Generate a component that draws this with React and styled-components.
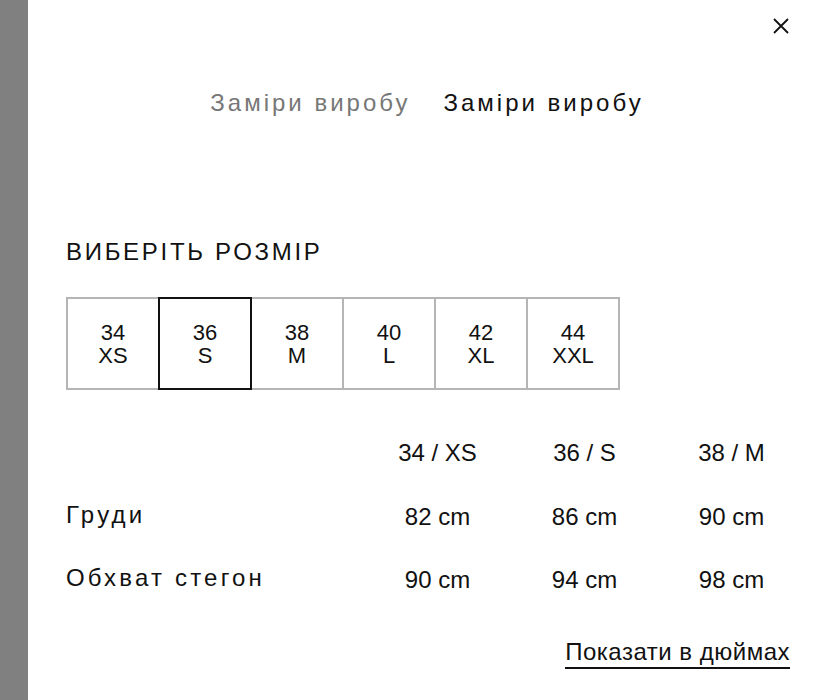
import styled, { createGlobalStyle } from "styled-components"

const GlobalStyle = createGlobalStyle`
  html, body {
    margin: 0;
    padding: 0;
    background: #808080;
  }
  body {
    font-family: "Liberation Sans", Arial, sans-serif;
    color: #111;
  }
`;

const sizes = [
  { num: "34", label: "XS" },
  { num: "36", label: "S" },
  { num: "38", label: "M" },
  { num: "40", label: "L" },
  { num: "42", label: "XL" },
  { num: "44", label: "XXL" },
];

const rows = [
  { name: "Груди", values: ["82 cm", "86 cm", "90 cm"] },
  { name: "Обхват стегон", values: ["90 cm", "94 cm", "98 cm"] },
];

const App = () => {
  return (
    <>
      <GlobalStyle />
      <Page>
        <Panel>
          <CloseRow>
            <CloseButton aria-label="close">
              <svg width="16" height="16" viewBox="0 0 16 16">
                <path d="M1 1L15 15M15 1L1 15" stroke="#111" strokeWidth="1.8" />
              </svg>
            </CloseButton>
          </CloseRow>

          <Tabs>
            <Tab>Заміри виробу</Tab>
            <Tab $active>Заміри виробу</Tab>
          </Tabs>

          <Title>ВИБЕРІТЬ РОЗМІР</Title>

          <SizeGrid>
            {sizes.map((s) => (
              <SizeBox key={s.num} $selected={s.num === "36"}>
                <SizeLine>{s.num}</SizeLine>
                <SizeLine>{s.label}</SizeLine>
              </SizeBox>
            ))}
          </SizeGrid>

          <Table>
            <Row>
              <Label />
              <Cell>34 / XS</Cell>
              <Cell>36 / S</Cell>
              <Cell>38 / M</Cell>
            </Row>
            {rows.map((r) => (
              <Row key={r.name}>
                <Label>{r.name}</Label>
                {r.values.map((v, i) => (
                  <Cell key={i}>{v}</Cell>
                ))}
              </Row>
            ))}
          </Table>

          <Footer>
            <InchLink href="#">Показати в дюймах</InchLink>
          </Footer>
        </Panel>
      </Page>
    </>
  );
};

export default App;

const Page = styled.div`
  display: flex;
  justify-content: flex-end;
  min-height: 700px;
`;

const Panel = styled.section`
  width: 800px;
  height: 700px;
  background: #fff;
  box-sizing: border-box;
  padding: 0 23px 0 38px;
  overflow: hidden;
`;

const CloseRow = styled.div`
  display: flex;
  justify-content: flex-end;
  padding: 18px 16px 0 0;
  height: 34px;
`;

const CloseButton = styled.button`
  background: none;
  border: none;
  padding: 0;
  width: 16px;
  height: 16px;
  cursor: pointer;
`;

const Tabs = styled.div`
  display: flex;
  justify-content: center;
  gap: 33px;
  margin-top: 37px;
  padding-right: 17px;
`;

const Tab = styled.div`
  font-size: 24px;
  letter-spacing: 3px;
  line-height: 28px;
  color: ${(p) => (p.$active ? "#111" : "#777")};
`;

const Title = styled.h2`
  margin: 121px 0 0;
  font-size: 24px;
  font-weight: 400;
  letter-spacing: 2.7px;
  line-height: 28px;
`;

const SizeGrid = styled.div`
  display: flex;
  margin-top: 31px;
`;

const SizeBox = styled.div`
  width: 94px;
  height: 93px;
  box-sizing: border-box;
  border: 2px solid ${(p) => (p.$selected ? "#111" : "#b5b5b5")};
  margin-left: -2px;
  position: relative;
  z-index: ${(p) => (p.$selected ? 1 : 0)};
  &:first-child {
    margin-left: 0;
  }
  display: flex;
  flex-direction: column;
  align-items: center;
  justify-content: center;
`;

const SizeLine = styled.span`
  font-size: 22px;
  line-height: 23px;
`;

const Table = styled.div`
  margin-top: 49px;
  display: flex;
  flex-direction: column;
  gap: 35.5px;
`;

const Row = styled.div`
  display: grid;
  grid-template-columns: 298px 147px 147px 147px;
  align-items: center;
  font-size: 24px;
  line-height: 28px;
`;

const Label = styled.div`
  letter-spacing: 3.2px;
  transform: translateY(-2px);
`;

const Cell = styled.div`
  text-align: center;
`;

const Footer = styled.div`
  display: flex;
  justify-content: flex-end;
  margin-top: 44px;
  padding-right: 15px;
`;

const InchLink = styled.a`
  font-size: 24px;
  line-height: 28px;
  letter-spacing: 0.5px;
  color: #111;
  text-decoration: none;
  border-bottom: 2px solid #111;
  padding-bottom: 1px;
`;
